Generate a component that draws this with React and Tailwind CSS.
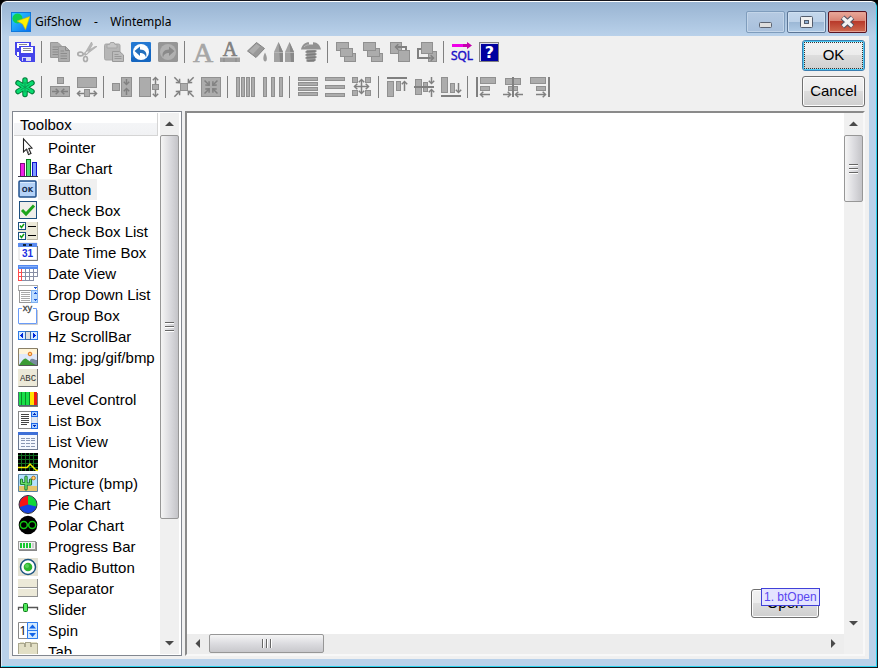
import React from "react";

/* ---------- shared icon helpers ---------- */
const F = "#acacac";
const S = "#909090";
const D = "#808080";

function Icon({ children, crisp = true }) {
  return (
    <svg
      viewBox="0 0 20 20"
      className="block h-5 w-5 shrink-0 overflow-visible"
      shapeRendering={crisp ? "crispEdges" : "auto"}
      fill="none"
      aria-hidden="true"
    >
      {children}
    </svg>
  );
}

function Box({ x, y, w, h, fill = F, stroke = S }) {
  return <rect x={x + 0.5} y={y + 0.5} width={w - 1} height={h - 1} fill={fill} stroke={stroke} />;
}

function Arrow({ x, y, len, dir }) {
  const angle = { right: 0, down: 90, left: 180, up: 270, se: 45, sw: 135, nw: 225, ne: 315 }[dir];
  return (
    <g transform={`translate(${x} ${y}) rotate(${angle})`} stroke={D} strokeWidth="1.500" shapeRendering="auto">
      <path d={`M${-len} 0H-1`} />
      <path d="M-3.300 -2.700L-.5 0L-3.300 2.700" />
    </g>
  );
}

/* ---------- toolbar icons ---------- */
const fileIcons = [
  ["Save all", <Icon>
    <path d="M0 0H16V4H5V15H2L0 13Z" fill="#4545ea" />
    <path d="M2 1H14V4H4V6H2Z" fill="#fff" />
    <path d="M4 2.500H12" stroke="#8b8b8b" />
    <path d="M2 10H4V14H2Z" fill="#fff" />
    <path d="M4 4H20V20H6L4 18Z" fill="#4545ea" />
    <path d="M6 5H18V11H6Z" fill="#fff" />
    <path d="M8 6.500H16M8 8.500H16" stroke="#8b8b8b" />
    <path d="M7 15H16V19H7Z" fill="#d9d9f4" /><path d="M8 16H11V19H8Z" fill="#4545ea" />
  </Icon>],
  null,
  ["Copy", <Icon crisp={false}>
    <path d="M.5 .5H8L11.500 4V15.500H.5Z" fill={F} stroke="#999" />
    <path d="M2.500 5H8M2.500 7.500H8M2.500 10H8M2.500 12.500H8" stroke="#8c8c8c" />
    <path d="M8.500 4.500H15.500L19.500 8.500V19.500H8.500Z" fill={F} stroke="#999" />
    <path d="M15.500 4.500V8.500H19.500M10.500 9H14M10.500 11.500H17M10.500 14H17M10.500 16.500H17" stroke="#8c8c8c" />
  </Icon>],
  ["Cut", <Icon crisp={false}>
    <path d="M14.500 0L15.500 2.500L10 12.500L8 11ZM20 4.500L18 4.500L6.500 11.500L8 13.500Z" fill="#b8b8b8" stroke="#a4a4a4" strokeWidth=".6" />
    <ellipse cx="3.500" cy="12" rx="2.700" ry="1.900" stroke={F} strokeWidth="1.700" />
    <ellipse cx="8.500" cy="17" rx="1.900" ry="2.500" stroke={F} strokeWidth="1.700" />
  </Icon>],
  ["Paste", <Icon crisp={false}>
    <rect x=".5" y="2" width="15.500" height="16" rx="1.500" fill="#b6b6b6" stroke="#a6a6a6" />
    <path d="M3 2.500H5.500L6.500 .5H10L11 2.500H13V6H3Z" fill="#c6c6c6" stroke="#a6a6a6" />
    <path d="M8.500 9.500H15.500L19.500 13V19.500H8.500Z" fill="#bbb" stroke="#999" />
    <path d="M10.500 12.500H14.500M10.500 14.500H17.500M10.500 16.500H17.500" stroke="#999" />
  </Icon>],
  ["Undo", <Icon crisp={false}>
    <rect width="20" height="20" rx="1.500" fill="#1566c0" />
    <path d="M0 0H20V7L0 16Z" fill="#3289e4" opacity=".5" />
    <circle cx="10" cy="10" r="8" fill="#fff" />
    <path d="M3.500 9L9 4.500V7.500C14 7.500 16.500 10.500 15 15.500C14 12 12 11 9 11V14Z" fill="#236fbd" />
  </Icon>],
  ["Redo", <Icon crisp={false}>
    <rect width="20" height="20" rx="1.500" fill="#969696" />
    <circle cx="10" cy="10" r="8" fill="#b1b1b1" />
    <path d="M16.500 9L11 4.500V7.500C6 7.500 3.500 10.500 5 15.500C6 12 8 11 11 11V14Z" fill="#8a8a8a" />
  </Icon>],
  null,
  ["Font", <Icon crisp={false}>
    <text x="10" y="20" textAnchor="middle" fontSize="28" fill="#a6a6a6" stroke="#a6a6a6" strokeWidth=".7" className="font-['Liberation_Serif',serif]">A</text>
  </Icon>],
  ["Text color", <Icon crisp={false}>
    <text x="10" y="14" textAnchor="middle" fontSize="20" fill={D} stroke={D} strokeWidth=".6" className="font-['Liberation_Serif',serif]">A</text>
    <path d="M0 15.500H20V20H0Z" fill="#a0a0a0" />
    <path d="M4 16V20M16 16V20" stroke="#888" />
  </Icon>],
  ["Fill", <Icon crisp={false}>
    <path d="M.5 9L9.500 .5L17.500 6.500L9 15.500Z" fill="#999" stroke="#858585" />
    <path d="M2 9L9.500 2L13 4.500L6 12Z" fill="#adadad" />
    <path d="M18 10.500C15.500 15 16 19.500 18.200 19.500S20.500 15 18 10.500Z" fill="#9c9c9c" />
  </Icon>],
  ["Pens", <Icon crisp={false}>
    <path d="M4.500 0L9 10V20H0V10Z" fill="#a2a2a2" /><path d="M15.500 0L20 10V20H11V10Z" fill="#a2a2a2" />
    <path d="M4.500 0L9 10V20H6ZM15.500 0L20 10V20H17Z" fill="#888" /><path d="M0 10.500H9M11 10.500H20" stroke="#b5b5b5" />
  </Icon>],
  ["Settings", <Icon crisp={false}>
    <path d="M0 7.500C1 2.500 5 0 8 .3V2.500H12V.3C16 0 19 3 20 7.500Z" fill="#929292" />
    <path d="M5.500 8H14.500V18L13 20H7L5.500 18Z" fill="#9a9a9a" />
    <path d="M4.500 10L15.500 9M4.500 13L15.500 12M4.500 16L15.500 15M5.500 19L14.500 18" stroke="#7d7d7d" strokeWidth="1.300" />
    <path d="M3 5C5 3 7 2.500 8 3" stroke="#b9b9b9" />
  </Icon>],
  null,
  ["Bring to front", <Icon><Box x={0} y={0} w={13} h={9} /><Box x={8} y={11} w={12} h={9} /><Box x={4} y={6} w={13} h={9} /></Icon>],
  ["Send to back", <Icon><Box x={8} y={11} w={12} h={9} /><Box x={4} y={6} w={13} h={9} /><Box x={0} y={0} w={13} h={9} /></Icon>],
  ["Bring forward", <Icon><Box x={0} y={0} w={12} h={12} /><Box x={8} y={8} w={12} h={12} /><path d="M8 5H16V8" stroke={D} strokeWidth="1.600" /><Arrow x={5} y={5} len={5} dir="left" /></Icon>],
  ["Send backward", <Icon><Box x={11} y={9} w={9} h={11} /><Box x={4} y={0} w={12} h={12} /><path d="M4 7H1V16H13" stroke={D} strokeWidth="2" /><Arrow x={17} y={16} len={5} dir="right" /></Icon>],
  null,
  ["SQL", <Icon crisp={false}>
    <path d="M0 2H15V0L20 3.500L15 7V5H0Z" fill="#c400ac" /><path d="M0 2H11V5H0Z" fill="#f000e8" />
    <text x="10" y="18" textAnchor="middle" fontSize="12" fontWeight="500" fill="#1c12c8" stroke="#1c12c8" strokeWidth=".5" className="font-['Open_Sans',sans-serif]">SQL</text>
  </Icon>],
  ["Help", <Icon crisp={false}>
    <path d="M0 0H20V20H0Z" fill="#808080" /><path d="M1 1H19V19H1Z" fill="#d8d8ea" /><path d="M2 2H19V19H2Z" fill="#0000a0" />
    <text x="10.500" y="16" textAnchor="middle" fontSize="16" fontWeight="700" fill="#fff" className="font-['DejaVu_Sans',sans-serif]">?</text>
  </Icon>],
];

const layoutIcons = [
  ["New", <Icon crisp={false}>
    <g stroke="#047d3b" strokeWidth="5.500" strokeLinecap="round"><path d="M10 3V17.500M3 6L17 14.500M17 6L3 14.500" /></g>
    <g stroke="#08dc70" strokeWidth="3.300" strokeLinecap="round"><path d="M10 3V17.500M3 6L17 14.500M17 6L3 14.500" /></g>
    <path d="M10 5V15.500M5.500 7.500L14.500 13M14.500 7.500L5.500 13" stroke="#0a9a50" />
  </Icon>],
  null,
  ["Shrink width", <Icon><Box x={7} y={0} w={7} h={7} /><Box x={0} y={9} w={20} h={11} /><Arrow x={9} y={14.5} len={7} dir="right" /><Arrow x={11} y={14.5} len={7} dir="left" /></Icon>],
  ["Grow width", <Icon><Box x={0} y={0} w={20} h={11} /><Box x={7} y={12} w={6} h={8} /><Arrow x={0} y={16.5} len={7} dir="left" /><Arrow x={20} y={16.5} len={7} dir="right" /></Icon>],
  null,
  ["Shrink height", <Icon><Box x={0} y={6} w={8} h={8} /><Box x={9} y={0} w={11} h={20} /><Arrow x={14.5} y={8} len={6} dir="down" /><Arrow x={14.5} y={11} len={7} dir="up" /></Icon>],
  ["Grow height", <Icon><Box x={0} y={0} w={12} h={20} /><Box x={13} y={7} w={7} h={6} /><Arrow x={16.5} y={0} len={7} dir="up" /><Arrow x={16.5} y={20} len={7} dir="down" /></Icon>],
  null,
  ["Shrink both", <Icon><Box x={6} y={6} w={8} h={8} /><Arrow x={6} y={6} len={8} dir="se" /><Arrow x={14} y={6} len={8} dir="sw" /><Arrow x={6} y={14} len={8} dir="ne" /><Arrow x={14} y={14} len={8} dir="nw" /></Icon>],
  ["Fit to content", <Icon><Box x={0} y={0} w={20} h={20} /><Arrow x={8.5} y={8.5} len={7} dir="se" /><Arrow x={11.5} y={8.5} len={7} dir="sw" /><Arrow x={8.5} y={11.5} len={7} dir="ne" /><Arrow x={11.5} y={11.5} len={7} dir="nw" /></Icon>],
  null,
  ["Pack columns", <Icon><Box x={0} y={0} w={4} h={20} /><Box x={5} y={0} w={4} h={20} /><Box x={10} y={0} w={4} h={20} /><Box x={15} y={0} w={4} h={20} /></Icon>],
  ["Space columns", <Icon><Box x={0} y={0} w={4} h={20} /><Box x={8} y={0} w={4} h={20} /><Box x={16} y={0} w={4} h={20} /></Icon>],
  null,
  ["Pack rows", <Icon><Box x={0} y={0} w={20} h={4} /><Box x={0} y={5} w={20} h={4} /><Box x={0} y={10} w={20} h={4} /><Box x={0} y={15} w={20} h={4} /></Icon>],
  ["Space rows", <Icon><Box x={0} y={0} w={20} h={4} /><Box x={0} y={8} w={20} h={4} /><Box x={0} y={16} w={20} h={4} /></Icon>],
  ["Space grid", <Icon>
    <Box x={0} y={0} w={6} h={6} /><Box x={13} y={0} w={6} h={6} /><Box x={0} y={13} w={6} h={6} /><Box x={13} y={13} w={6} h={6} />
    <Arrow x={9.5} y={2} len={8} dir="up" /><Arrow x={9.5} y={17} len={8} dir="down" /><Arrow x={2} y={9.5} len={8} dir="left" /><Arrow x={17} y={9.5} len={8} dir="right" />
  </Icon>],
  null,
  ["Align top", <Icon><path d="M0 1H20" stroke={D} strokeWidth="2" /><Box x={0} y={4} w={7} h={16} /><Box x={9} y={4} w={5} h={10} /><Arrow x={17.5} y={4} len={10} dir="up" /></Icon>],
  ["Align middle", <Icon><Box x={1} y={2} w={7} h={16} /><Box x={9} y={5} w={5} h={10} /><path d="M0 10H20" stroke={D} strokeWidth="2" /><Arrow x={17.5} y={7} len={7} dir="down" /><Arrow x={17.5} y={12} len={8} dir="up" /></Icon>],
  ["Align bottom", <Icon><path d="M0 19H20" stroke={D} strokeWidth="2" /><Box x={0} y={0} w={7} h={16} /><Box x={9} y={6} w={5} h={10} /><Arrow x={17.5} y={16} len={10} dir="down" /></Icon>],
  null,
  ["Align left", <Icon><path d="M1 0V20" stroke={D} strokeWidth="2" /><Box x={4} y={0} w={16} h={7} /><Box x={4} y={9} w={10} h={5} /><Arrow x={4} y={17.5} len={10} dir="left" /></Icon>],
  ["Align center", <Icon><Box x={2} y={1} w={16} h={7} /><Box x={5} y={9} w={10} h={5} /><path d="M10 0V20" stroke={D} strokeWidth="2" /><Arrow x={8} y={17.5} len={8} dir="right" /><Arrow x={12} y={17.5} len={8} dir="left" /></Icon>],
  ["Align right", <Icon><path d="M19 0V20" stroke={D} strokeWidth="2" /><Box x={0} y={0} w={16} h={7} /><Box x={6} y={9} w={10} h={5} /><Arrow x={16} y={17.5} len={10} dir="right" /></Icon>],
];

/* ---------- toolbox ---------- */
const BEIGE = "#ece9d8";
const tools = [
  ["Pointer", <Icon crisp={false}><path d="M5.500 .8V14L8.500 11.200L10.500 16.500L13 15.500L10.800 10.500L14 10Z" fill="#fff" stroke="#222" strokeWidth="1.100" /><path d="M9 11L11 16" stroke="#777" /></Icon>],
  ["Bar Chart", <Icon><Box x={2} y={4} w={5} h={14} fill="#ee22e6" stroke="#800a80" /><Box x={8} y={0} w={5} h={18} fill="#4ee070" stroke="#0a7a20" /><Box x={14} y={3} w={5} h={15} fill="#7d9bff" stroke="#1212d0" /><path d="M0 17.500H20" stroke="#334" /></Icon>],
  ["Button", <Icon crisp={false}><rect x="1" y="1" width="17" height="16" rx="1" fill="#b4d2f7" stroke="#20508c" strokeWidth="1.500" /><path d="M2 2.500H17" stroke="#dcecff" /><text x="9.500" y="12" textAnchor="middle" fontSize="7" fontWeight="700" fill="#1a2f50" className="font-['DejaVu_Sans',sans-serif]">OK</text></Icon>],
  ["Check Box", <Icon crisp={false}><rect x="1.500" y=".5" width="17" height="17" fill="#efeeea" stroke="#1d5080" /><path d="M4 9L8 13L16 4.500" stroke="#1ea51e" strokeWidth="3" /></Icon>],
  ["Check Box List", <Icon crisp={false}><path d="M0 0H20V18H0Z" fill={BEIGE} /><path d="M19.500 0V17.500H9" stroke="#b8b5a5" /><rect x=".5" y=".5" width="7" height="7" fill="#fff" stroke="#1d5080" /><rect x=".5" y="10.500" width="7" height="7" fill="#fff" stroke="#1d5080" /><path d="M2 3.500L3.500 5.500L6 2M2 13.500L3.500 15.500L6 12" stroke="#14a014" strokeWidth="1.500" /><path d="M10 4.500H18M10 13.500H18" stroke="#000" /></Icon>],
  ["Date Time Box", <Icon crisp={false}><path d="M2 17.500H19.500V3" stroke="#666" /><path d="M1 0H19V17H1Z" fill="#fff" stroke="#bbb" strokeWidth=".5" /><path d="M0 0H19V4H0Z" fill="#5b8cf0" /><path d="M5 1H8V3H5ZM11 1H14V3H11Z" fill="#123" /><text x="9.500" y="14" textAnchor="middle" fontSize="10" fontWeight="700" fill="#1a2ee0" className="font-['Liberation_Sans',sans-serif]">31</text></Icon>],
  ["Date View", <Icon><path d="M0 1H20V13L16 17H0Z" fill="#fff" /><path d="M3.500 5V17M7.500 5V17M11.500 5V17M15.500 5V17M19.500 5V13M0 8.500H20M0 12.500H20M3 16.500H16" stroke="#888fa5" /><path d="M.5 5V16.500H3.500V5M0 8.500H4M0 12.500H4" stroke="#ff4b4b" /><path d="M0 1H20V5H0Z" fill="#5288f0" /><path d="M1 2H19V3H1Z" fill="#86aff8" /></Icon>],
  ["Drop Down List", <Icon><Box x={0} y={0} w={20} h={6} fill="#fff" stroke="#aaa" /><Box x={1} y={5} w={13} h={13} fill="#fff" stroke="#999" /><path d="M3 7.500H12M3 9.500H12M3 11.500H12M3 13.500H12M3 15.500H12" stroke="#aaa" /><Box x={13} y={5} w={7} h={13} fill="#bcdcff" stroke="#7db0f0" /><path d="M15 2H19L17 4ZM15 9L17 7L19 9ZM15 14H19L17 16Z" fill="#1c58d8" /></Icon>],
  ["Group Box", <Icon crisp={false}><path d="M4 2.500H.5V17.500H18.500V2.500H15" stroke="#6a9cf8" /><path d="M1 18.500H19.500V4" stroke="#ccc" /><text x="9.500" y="5" textAnchor="middle" fontSize="9" fill="#444" stroke="#444" strokeWidth=".3" className="font-['Noto_Sans',sans-serif]">xy</text></Icon>],
  ["Hz ScrollBar", <Icon><Box x={0} y={4} w={20} h={9} fill="#c8e2ff" stroke="#2d7be8" /><path d="M1 5H7V12H1ZM13 5H19V12H13Z" fill="#d8ecff" /><Box x={7} y={4} w={6} h={9} fill="#ddd" stroke="#3a6ba8" /><path d="M5 6V11L2 8.500ZM15 6V11L18 8.500Z" fill="#0028d8" /></Icon>],
  ["Img: jpg/gif/bmp", <Icon crisp={false}><path d="M.5 .5H19.500V17.500H.5Z" fill="#dfe9fa" stroke="#8a8068" /><path d="M1 1H19V6H1Z" fill="#fff5d8" /><circle cx="12" cy="6" r="1.800" fill="#ffd080" stroke="#e07018" /><path d="M12 12C14 9 17 12 19 12V17H12Z" fill="#7b8ba0" /><path d="M1 17C3 15 6 9 8.500 11C12 13 15 16 18 17Z" fill="#3c9b35" /><path d="M1 17.500H19.500V1" stroke="#555" /></Icon>],
  ["Label", <Icon crisp={false}><path d="M0 0H20V18H0Z" fill={BEIGE} /><path d="M.5 17.500H19.500V0" stroke="#777" /><text x="10" y="12" textAnchor="middle" fontSize="9" fill="#333" className="font-['Liberation_Mono',monospace]">ABC</text></Icon>],
  ["Level Control", <Icon><path d="M1 3H20V17H1Z" fill="#777" /><path d="M0 2H19V15H0Z" fill="#18e048" /><path d="M3.500 2V15M7.500 2V15M11.500 2V15" stroke="#0b8a28" /><path d="M12 2H16V15H12Z" fill="#ffe000" /><path d="M16 2H19V15H16Z" fill="#f01c10" /><path d="M.5 2V15.500H19" stroke="#567" /></Icon>],
  ["List Box", <Icon><Box x={0} y={0} w={20} h={18} fill="#fff" stroke="#888" /><path d="M3 3.500H11M3 5.500H11M3 7.500H11M3 9.500H11M3 11.500H11M3 13.500H9" stroke="#444" /><Box x={13} y={0} w={7} h={18} fill="#e1e9f4" stroke="#b5c5d6" /><Box x={13} y={0} w={7} h={6} fill="#a9d2ff" stroke="#1c68e8" /><Box x={13} y={12} w={7} h={6} fill="#a9d2ff" stroke="#1c68e8" /><path d="M15 4L16.500 2L18 4ZM15 14H18L16.500 16Z" fill="#0028c0" /></Icon>],
  ["List View", <Icon><Box x={0} y={0} w={20} h={18} fill="#f4f8ff" stroke="#6b7890" /><path d="M0 0H20V3H0Z" fill="#3e70d8" /><path d="M3 6.500H17M3 8.500H17M3 11.500H17M3 14.500H17" stroke="#8a98b4" strokeDasharray="4 1" /></Icon>],
  ["Monitor", <Icon><path d="M0 0H20V18H0Z" fill="#000" /><path d="M3.500 0V18M7.500 0V18M11.500 0V18M15.500 0V18M0 2.500H20M0 6.500H20M0 10.500H20M0 14.500H20" stroke="#126c20" /><path d="M0 14.500H9L12 11L18 17L20 17.500" stroke="#f5ee00" strokeWidth="1.400" shapeRendering="auto" /></Icon>],
  ["Picture (bmp)", <Icon crisp={false}><path d="M.5 .5H19.500V17.500H.5Z" fill="#b6e2ff" stroke="#5b83a0" /><path d="M1 12H19V17H1Z" fill="#e6c66e" /><circle cx="15.500" cy="4" r="1.800" fill="#ffe070" stroke="#c06b20" /><path d="M8 15V3M3.500 6V9.500H8M12.500 6V10H8" stroke="#0c6a20" strokeWidth="3.200" strokeLinecap="round" strokeLinejoin="round" /><path d="M8 15V3M3.500 6V9.500H8M12.500 6V10H8" stroke="#6be06b" strokeWidth="1.500" strokeLinecap="round" /></Icon>],
  ["Pie Chart", <Icon crisp={false}><circle cx="10" cy="9.500" r="9" fill="#1844e0" stroke="#333" /><path d="M10 9.500V1A8.500 8.500 0 0 0 2 12Z" fill="#f81414" /><path d="M10 9.500V1A8.500 8.500 0 0 1 18.200 11.500Z" fill="#12d838" /></Icon>],
  ["Polar Chart", <Icon crisp={false}><circle cx="10" cy="9" r="9.300" fill="#000" /><circle cx="5.800" cy="9" r="3.500" stroke="#12c412" strokeWidth="1.500" /><circle cx="14.200" cy="9" r="3.500" stroke="#12c412" strokeWidth="1.500" /></Icon>],
  ["Progress Bar", <Icon><path d="M1 5H19V14H1Z" fill="#888" /><Box x={0} y={4} w={18} h={9} fill="#f2f2f2" stroke="#999" /><path d="M2 6H4V11H2ZM5 6H7V11H5ZM8 6H10V11H8ZM11 6H13V11H11Z" fill="#16c830" /><path d="M14 6H16V11H14Z" fill="#ccc" /></Icon>],
  ["Radio Button", <Icon crisp={false}><path d="M0 0H20V18H0Z" fill="#e4e2d4" /><circle cx="10" cy="9" r="7.500" fill="#fff" stroke="#1d5580" strokeWidth="1.500" /><circle cx="10" cy="9" r="4.300" fill="#2db52d" /><circle cx="9" cy="8" r="2" fill="#58d058" /></Icon>],
  ["Separator", <Icon><path d="M0 0H20V18H0Z" fill={BEIGE} /><path d="M0 8.500H20M0 17.500H19.500V0" stroke="#909090" /><path d="M0 9.500H19" stroke="#fff" /></Icon>],
  ["Slider", <Icon crisp={false}><path d="M.5 10V7.500H19.500V10" stroke="#555" strokeWidth="1.300" /><rect x="5.500" y="3.500" width="4" height="8" rx="1" fill="#52e85c" stroke="#0c7a18" /></Icon>],
  ["Spin", <Icon crisp={false}><path d="M.5 1.500H19.500V17.500H.5Z" fill="#fff" stroke="#888" /><text x="5" y="14" textAnchor="middle" fontSize="12" fill="#111" className="font-['Noto_Sans',sans-serif]">1</text><path d="M9.500 1.500H19.500V17.500H9.500ZM9.500 9.500H19.500" fill="#d3eaff" stroke="#2c7cf0" /><path d="M11 7.500L14.500 3.500L18 7.500ZM11 12H18L14.500 16Z" fill="#1264e8" /></Icon>],
  ["Tab", <Icon><path d="M0 2L2 0H6V3H7V0H12V3H13V0H18L20 2V18H0Z" fill="#e2dfc5" /><path d="M.5 18V1.500H6.500V4H7.500V.5H12.500V4H13.500V1.500H19.500V18" stroke="#aaa78e" /></Icon>],
];

/* ---------- chrome pieces ---------- */
function Toolbar({ items, label }) {
  return (
    <div role="toolbar" aria-label={label} className="flex h-[22px] items-center">
      {items.map((it, i) =>
        it ? (
          <button key={i} type="button" aria-label={it[0]} className="w-[27px] shrink-0 pl-[3px]">
            {it[1]}
          </button>
        ) : (
          <div key={i} className="h-[22px] w-2 shrink-0 pl-0.5">
            <div className="h-full w-px bg-[#808080]" />
          </div>
        )
      )}
    </div>
  );
}

function Chevron({ dir }) {
  const d = { up: "M0 6H9L4.500 1.500Z", down: "M0 2H9L4.500 6.500Z", left: "M6 0V9L1.500 4.500Z", right: "M2 0V9L6.500 4.500Z" }[dir];
  return (
    <svg viewBox="0 0 9 9" className="h-[9px] w-[9px]" aria-hidden="true">
      <path d={d} fill="#4a4a4a" />
    </svg>
  );
}

function VScroll({ label, thumb }) {
  return (
    <div className="flex h-full w-full flex-col bg-[#f0f0f0]">
      <button type="button" aria-label={`${label} up`} className="flex h-[22px] shrink-0 items-center justify-center">
        <Chevron dir="up" />
      </button>
      <div className="min-h-0 grow">
        <div className={`flex w-full flex-col items-center justify-center gap-0.5 rounded-[2px] border border-[#979797] bg-linear-to-r from-[#f5f5f5] via-[#dcdce0] to-[#c4c4c8] ${thumb}`}>
          <i className="h-0.5 w-[9px] border-t border-[#666] bg-white" />
          <i className="h-0.5 w-[9px] border-t border-[#666] bg-white" />
          <i className="h-0.5 w-[9px] border-t border-[#666] bg-white" />
        </div>
      </div>
      <button type="button" aria-label={`${label} down`} className="flex h-[22px] shrink-0 items-center justify-center">
        <Chevron dir="down" />
      </button>
    </div>
  );
}

function HScroll() {
  return (
    <div className="flex h-full w-full bg-[#ededed]">
      <button type="button" aria-label="Canvas left" className="flex h-[19px] w-[22px] shrink-0 items-center justify-center">
        <Chevron dir="left" />
      </button>
      <div className="min-w-0 grow">
        <div className="flex h-[19px] w-[115px] items-center justify-center gap-0.5 rounded-[2px] border border-[#979797] bg-linear-to-b from-[#f5f5f5] via-[#dcdce0] to-[#c8c8cc]">
          <i className="h-[9px] w-0.5 border-l border-[#666] bg-white" />
          <i className="h-[9px] w-0.5 border-l border-[#666] bg-white" />
          <i className="h-[9px] w-0.5 border-l border-[#666] bg-white" />
        </div>
      </div>
      <button type="button" aria-label="Canvas right" className="flex h-[19px] w-[22px] shrink-0 items-center justify-center">
        <Chevron dir="right" />
      </button>
    </div>
  );
}

const face = "bg-[linear-gradient(#f2f2f2_0%,#ebebeb_49%,#dddddd_50%,#cfcfcf_100%)]";

function TitleBar() {
  return (
    <header className="flex h-[34px] shrink-0 items-start justify-between bg-linear-to-b from-[#99b4d2] to-[#b9d1ea] pr-[9px] pl-[9px]">
      <div className="flex items-center gap-1 pt-[10px]">
        <svg viewBox="0 0 20 20" className="h-5 w-5" aria-hidden="true">
          <defs>
            <linearGradient id="appTile" x1="0" y1="0" x2="1" y2="1">
              <stop offset="0" stopColor="#2fd4ff" />
              <stop offset="1" stopColor="#0a6cf0" />
            </linearGradient>
          </defs>
          <rect x=".5" y=".5" width="19" height="19" fill="url(#appTile)" stroke="#0f78dc" />
          <circle cx="6.500" cy="6.500" r="5" fill="#10cf50" />
          <path d="M6 9L18.800 4.500L14.500 17.800L11.500 12Z" fill="#fff200" stroke="#b8b020" strokeWidth=".6" />
        </svg>
        <h1 className="font-['Noto_Sans',sans-serif] text-xs leading-5 whitespace-pre text-black">
          {"GifShow    -    Wintempla"}
        </h1>
      </div>
      <div className="flex gap-0.5 pt-[9px]">
        <button type="button" aria-label="Minimize" className="h-[22px] w-[39px] rounded-[2px] border border-[#7f9dbd] bg-linear-to-b from-[#b5cae2] to-[#a8c0dc] shadow-[inset_0_0_0_1px_#c3d5e9]">
          <svg viewBox="0 0 37 20" aria-hidden="true" className="block"><rect x="12.500" y="10.500" width="12" height="5" rx="1" fill="#dedede" stroke="#5c6472" /></svg>
        </button>
        <button type="button" aria-label="Maximize" className="h-[22px] w-[39px] rounded-[2px] border border-[#5b7595] bg-[linear-gradient(#c5d8ec_0%,#bcd1e8_49%,#9bb7d5_50%,#b0cbe6_100%)] shadow-[inset_0_0_0_1px_#cfe0f1]">
          <svg viewBox="0 0 37 20" aria-hidden="true" className="block"><rect x="12.500" y="4.500" width="12" height="11" rx="1" fill="#f0f0f0" stroke="#535c6c" /><rect x="16.500" y="8.500" width="4" height="3" fill="#8eb0d4" stroke="#535c6c" /></svg>
        </button>
        <button type="button" aria-label="Close" className="h-[22px] w-[39px] rounded-[2px] border border-[#5a1420] bg-[linear-gradient(#e9a99b_0%,#d98373_45%,#b8392a_46%,#cf6a50_100%)] shadow-[inset_0_0_0_1px_#e5a294]">
          <svg viewBox="0 0 37 20" aria-hidden="true" className="block"><path d="M13.500 5.500L23.500 14.500M23.500 5.500L13.500 14.500" stroke="#535666" strokeWidth="5.500" /><path d="M13.800 5.800L23.200 14.200M23.200 5.800L13.800 14.200" stroke="#f3f3f3" strokeWidth="3.200" /></svg>
        </button>
      </div>
    </header>
  );
}

export default function App() {
  return (
    <div className="h-screen bg-black font-['Liberation_Sans',Arial,sans-serif] text-[15px] text-black">
      <div className="h-full rounded-t-[7px] border border-[#15151c]">
        <div className="flex h-full flex-col overflow-hidden rounded-t-md border border-t-white border-r-[#2bd2ee] border-b-[#2bd2ee] border-l-[#dcebf8] bg-[#b9d1ea]">
          <TitleBar />
          <main className="mx-[7px] mb-[7px] flex min-h-0 grow flex-col bg-[#f0f0f0] pr-1 pb-[3px] pl-[3px]">
            <div className="flex shrink-0 items-start justify-between pt-1 pb-1">
              <div className="flex flex-col gap-[13px] pt-px">
                <Toolbar label="Edit" items={fileIcons} />
                <Toolbar label="Layout" items={layoutIcons} />
              </div>
              <div className="flex w-[63px] shrink-0 flex-col gap-[5px]">
                <button type="button" className={`h-[31px] rounded-[3px] border border-[#3c7fb1] p-px shadow-[inset_0_0_0_1px_#4ccbf5] ${face}`}>
                  <span className="flex h-full items-center justify-center border border-dotted border-[#333]">OK</span>
                </button>
                <button type="button" className={`h-[31px] rounded-[3px] border border-[#707070] shadow-[inset_0_0_0_1px_#fcfcfc] ${face}`}>Cancel</button>
              </div>
            </div>

            <div className="flex min-h-0 grow gap-[3px]">
              <aside className="flex w-[170px] shrink-0 border border-[#828790] bg-white p-px">
                <div className="flex min-w-0 grow flex-col overflow-hidden">
                  <h2 className="mr-0.5 h-[23px] shrink-0 border-r border-b border-[#d5d5d5] bg-[linear-gradient(#ffffff_0%,#ffffff_45%,#f4f5f7_46%,#f1f2f4_100%)] pl-[6px] leading-[23px]">
                    Toolbox
                  </h2>
                  <ul className="min-h-0 grow overflow-hidden pt-px pl-1">
                    {tools.map(([name, icon]) => (
                      <li key={name}>
                        <button type="button" className="flex h-[21px] items-end text-left whitespace-nowrap">
                          {icon}
                          <span className={`pr-[6px] pl-[10px] leading-[21px] ${name === "Button" ? "bg-[#f0f0f0]" : ""}`}>{name}</span>
                        </button>
                      </li>
                    ))}
                  </ul>
                </div>
                <div className="w-5 shrink-0 pr-px">
                  <VScroll label="Toolbox" thumb="h-[384px]" />
                </div>
              </aside>

              <section aria-label="Canvas" className="grid min-w-0 grow grid-cols-[1fr_19px] grid-rows-[1fr_20px] border-2 border-t-[#8a8a8a] border-r-[#f8f8f8] border-b-[#f8f8f8] border-l-[#8a8a8a] bg-[#f0f0f0]">
                <div className="relative overflow-hidden bg-white">
                  <button type="button" className={`absolute top-[476px] left-[564px] h-[29px] w-[68px] rounded-[3px] border border-[#707070] shadow-[inset_0_0_0_1px_#fcfcfc] ${face}`}>Open</button>
                  <span className="absolute top-[475px] left-[574px] h-[18px] border border-[#4040d8] bg-[#e4e4ff] px-0.5 text-xs leading-4 whitespace-nowrap text-[#5a46f0]">1. btOpen</span>
                </div>
                <VScroll label="Canvas" thumb="h-[67px]" />
                <HScroll />
              </section>
            </div>
          </main>
        </div>
      </div>
    </div>
  );
}
